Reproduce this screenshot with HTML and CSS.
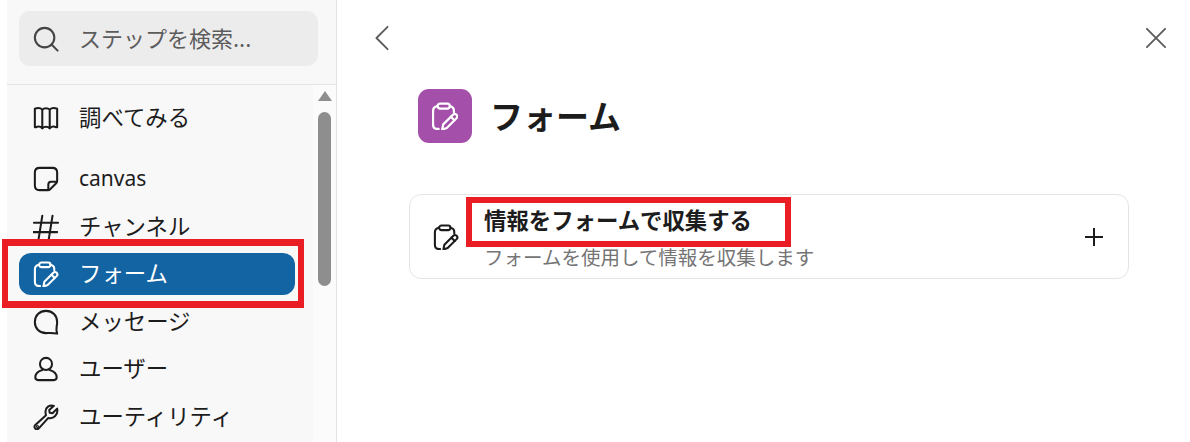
FILE: index.html
```html
<!DOCTYPE html>
<html lang="ja">
<head>
  <meta charset="UTF-8" />
  <title>フォーム</title>
  <link rel="stylesheet" href="styles.css">
</head>
<body>
  <svg class="defs" width="0" height="0">
    <symbol id="form-icon" viewBox="0 0 25.500 27.500">
      <path d="M5 4 C2.500 4.500 1 6 1 9 V22 C1 25 2.500 26.500 5.500 26.500 H6.500" />
      <path d="M17.500 4 C20 4.500 21.500 6 21.500 8.500 V10" />
      <rect x="5.500" y="1.500" width="12" height="5" rx="2.500" />
      <path d="M10 27 L11 22 L20.500 12.500 C21.500 11.500 23 11.500 24 12.500 C25 13.500 25 15 24 16 L14.500 25.500 Z" />
      <path d="M18.500 14.500 L22 18" />
    </symbol>
  </svg>

  <aside class="sidebar">
    <div class="search-wrap">
      <div class="search">
        <svg class="icon" viewBox="0 0 28 28"><circle cx="12.500" cy="12.500" r="10.500" /><path d="M20 20 L26.500 26.500" /></svg>
        <span>ステップを検索...</span>
      </div>
    </div>
    <div class="list-wrap">
      <nav class="list">
        <div class="group">
          <a class="item">
            <svg class="icon" viewBox="0 0 28 28"><path d="M2 4 C5 3 8 3 10 5 V25 C8 23 5 23 3 24 L2 24 Z" /><path d="M10 5 C12 3 16 3 18 5 V25 C16 23 12 23 10 25" /><path d="M18 5 C20 3 23 3 26 4 V24 L25 24 C23 23 20 23 18 25" /></svg>
            <span>調べてみる</span>
          </a>
        </div>
        <div class="group">
          <a class="item">
            <svg class="icon" viewBox="0 0 28 28"><path d="M16 26 H7 C4 26 2 24 2 21 V7 C2 4 4 2 7 2 H21 C24 2 26 4 26 7 V16 C26 17 25.500 18 25 18.500 L18.500 25 C18 25.500 17 26 16 26 Z" /><path d="M16.500 25.500 V20 C16.500 18 17.500 17 19.500 17 H25.500" /></svg>
            <span class="latin">canvas</span>
          </a>
          <a class="item">
            <svg class="icon" viewBox="0 0 28 28"><path d="M10 2 L6 27 M21 2 L17 27 M1 9.500 H27 M0 19.500 H26" /></svg>
            <span>チャンネル</span>
          </a>
          <a class="item active">
            <svg class="icon"><use href="#form-icon" /></svg>
            <span>フォーム</span>
          </a>
          <a class="item">
            <svg class="icon" viewBox="0 0 28 28"><path d="M14 2 C7 2 2 7 2 14 C2 21 7 26 14 26 C17 26 20 25.500 26 26.500 C25 23 25 21 25.500 18.500 C26 17 26 15.500 26 14 C26 7 21 2 14 2 Z" /></svg>
            <span>メッセージ</span>
          </a>
          <a class="item">
            <svg class="icon" viewBox="0 0 28 28"><circle cx="14" cy="8.500" r="6.500" /><path d="M10 15 C5 16.500 2.500 19 2.500 23 C2.500 25 3.500 26 5.500 26 H22.500 C24.500 26 25.500 25 25.500 23 C25.500 19 23 16.500 18 15" /></svg>
            <span>ユーザー</span>
          </a>
          <a class="item">
            <svg class="icon" viewBox="0 0 28 28"><path d="M26 5 L21 10 L18 9.500 L17.500 6.500 L22.500 2 C18 0.500 13 3.500 13.500 9 C13.500 10 13.500 11 14 12 L2.500 22.500 C1 24 1.500 25.500 2.500 26.500 C3.500 27.500 5 27.500 6.500 26 L16.500 15 C22 16.500 27.500 11.500 26 5 Z" /><circle cx="4.800" cy="24.200" r="0.600" /></svg>
            <span>ユーティリティ</span>
          </a>
        </div>
      </nav>
      <div class="scrollbar">
        <div class="scroll-arrow"></div>
        <div class="scroll-thumb"></div>
      </div>
    </div>
  </aside>

  <main class="content">
    <div class="topbar">
      <svg class="top-icon" viewBox="0 0 16 28"><path d="M14 2 L2 14 L14 26" /></svg>
      <svg class="top-icon" viewBox="0 0 22 22"><path d="M1 1 L21 21 M21 1 L1 21" /></svg>
    </div>
    <div class="heading">
      <div class="app-badge"><svg class="badge-icon"><use href="#form-icon" /></svg></div>
      <h1>フォーム</h1>
    </div>
    <div class="card">
      <svg class="icon"><use href="#form-icon" /></svg>
      <div class="card-text">
        <div class="card-title">情報をフォームで収集する</div>
        <div class="card-desc">フォームを使用して情報を収集します</div>
      </div>
      <svg class="plus" viewBox="0 0 18 18"><path d="M9 0 V18 M0 9 H18" /></svg>
    </div>
  </main>

  <div class="mark mark-nav"></div>
  <div class="mark mark-card"></div>
</body>
</html>
```

FILE: styles.css
```css
:root {
  --text: #1d1c1d;
  --line: #e4e4e4;
  --red: #ea1c24;
}

html, body {
  height: 100%;
}

body {
  margin: 0;
  display: flex;
  height: 442px;
  overflow: hidden;
  background: #fff;
  color: var(--text);
  font-family: "Noto Sans CJK JP", "Noto Sans", sans-serif;
  font-size: 22.4px;
}

.defs {
  position: absolute;
}

svg {
  fill: none;
  stroke: currentColor;
  stroke-linecap: round;
  stroke-linejoin: round;
}

/* sidebar */
.sidebar {
  width: 329px;
  margin-left: 7px;
  flex-shrink: 0;
  background: #f8f8f8;
  border-right: 1px solid var(--line);
  display: flex;
  flex-direction: column;
}

.search-wrap {
  padding: 11px 18px 18px 12px;
  border-bottom: 1px solid var(--line);
}

.search {
  height: 55px;
  display: flex;
  align-items: center;
  gap: 20px;
  padding-left: 14px;
  background: #ececec;
  border-radius: 11px;
  color: #5d5c5d;
  font-size: 22px;
}

.search span,
.item span {
  margin-bottom: 4px;
}

.item .latin {
  margin-bottom: 2px;
  font-family: "Noto Sans", sans-serif;
  font-size: 21px;
}

.icon {
  width: 26px;
  height: 26px;
  flex-shrink: 0;
  stroke-width: 2.200;
}

.search .icon {
  color: #454445;
}

.list-wrap {
  flex: 1;
  display: flex;
  min-height: 0;
}

.list {
  flex: 1;
  padding: 12px 18px 0 12px;
}

.group {
  display: flex;
  flex-direction: column;
  gap: 5.500px;
  margin-bottom: 19px;
}

.item {
  height: 42px;
  display: flex;
  align-items: center;
  gap: 20px;
  padding-left: 14px;
  border-radius: 12px;
}

.item.active {
  background: #1264a3;
  color: #fff;
}

.scrollbar {
  width: 23px;
  background: #fbfbfb;
  display: flex;
  flex-direction: column;
  align-items: center;
}

.scroll-arrow {
  margin-top: 6px;
  width: 0;
  height: 0;
  border-left: 7.500px solid transparent;
  border-right: 7.500px solid transparent;
  border-bottom: 10px solid #8e8e8e;
}

.scroll-thumb {
  margin-top: 11px;
  width: 13px;
  height: 174px;
  background: #8e8e8e;
  border-radius: 7px;
}

/* right panel */
.content {
  flex: 1;
  padding: 25px 24px 0 37px;
}

.topbar {
  display: flex;
  justify-content: space-between;
  align-items: center;
  height: 26px;
}

.top-icon {
  height: 26px;
  width: 16px;
  color: #5d5c5d;
  stroke-width: 2;
}

.top-icon:last-child {
  height: 20px;
  width: 20px;
}

.heading {
  display: flex;
  align-items: center;
  gap: 20px;
  margin: 38px 0 51px 44px;
}

.app-badge {
  width: 54px;
  height: 54px;
  border-radius: 11px;
  background: #a450ab;
  color: #fff;
  display: flex;
  align-items: center;
  justify-content: center;
}

.badge-icon {
  width: 26px;
  height: 28px;
  stroke-width: 2.200;
}

h1 {
  margin: 0 0 2px -2px;
  font-size: 33px;
  font-weight: 700;
}

.card {
  width: 720px;
  height: 85px;
  margin-left: 35px;
  box-sizing: border-box;
  display: flex;
  align-items: center;
  gap: 25px;
  padding: 0 25px 0 23px;
  border: 1px solid var(--line);
  border-radius: 12px;
}

.card-text {
  flex: 1;
  display: flex;
  flex-direction: column;
  gap: 12px;
  padding-top: 2px;
  line-height: 25px;
}

.card-title {
  font-weight: 700;
}

.card-desc {
  font-size: 19.500px;
  color: #757475;
}

.plus {
  width: 18px;
  height: 18px;
  stroke-width: 2;
  stroke-linecap: butt;
}

/* red annotation frames over the screenshot */
.mark {
  position: absolute;
  box-sizing: border-box;
  border: 6px solid var(--red);
}

.mark-nav {
  left: 2px;
  top: 239px;
  width: 302px;
  height: 69px;
  border-width: 7px 6px;
}

.mark-card {
  left: 466px;
  top: 197px;
  width: 325px;
  height: 50px;
}
```
